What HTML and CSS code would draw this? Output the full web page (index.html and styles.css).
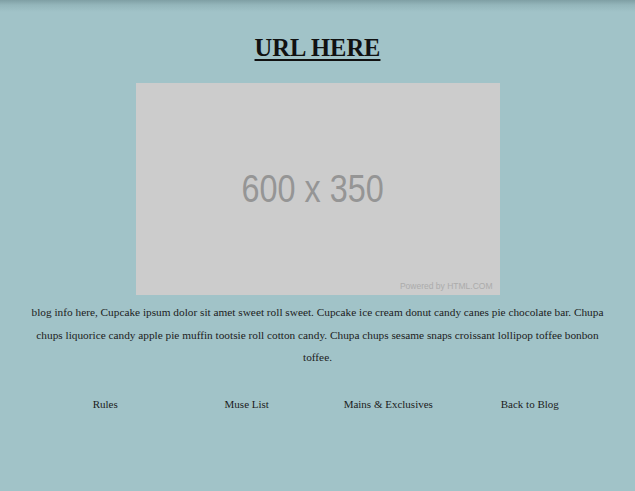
FILE: index.html
```html
<!DOCTYPE html>
<html>
<head>
<meta charset="utf-8">
<link rel="stylesheet" href="styles.css">
</head>
<body>
<div class="page">
  <h1 class="title"><a href="#">URL HERE</a></h1>
  <div class="placeholder">
    <span class="ph-size">600 x 350</span>
    <span class="ph-credit">Powered by HTML.COM</span>
  </div>
  <p class="info">blog info here, Cupcake ipsum dolor sit amet sweet roll sweet. Cupcake ice cream donut candy canes pie chocolate bar. Chupa chups liquorice candy apple pie muffin tootsie roll cotton candy. Chupa chups sesame snaps croissant lollipop toffee bonbon toffee.</p>
  <nav class="nav">
    <a href="#">Rules</a>
    <a href="#">Muse List</a>
    <a href="#">Mains &amp; Exclusives</a>
    <a href="#">Back to Blog</a>
  </nav>
</div>
</body>
</html>
```
FILE: styles.css
```css
html, body {
  margin: 0;
  height: 100%;
}
body {
  background: linear-gradient(to bottom, #7f9fa4 0px, #94b6bb 5px, #a1c3c8 12px) no-repeat, #a1c3c8;
  background-size: 100% 12px, auto;
  font-family: "Liberation Serif", "Times New Roman", serif;
  color: #1c1c1c;
}
.page {
  display: flex;
  flex-direction: column;
  align-items: center;
  padding-top: 33px;
}
.title {
  margin: 0;
  font-size: 24.5px;
  line-height: 30px;
  font-weight: bold;
}
.title a {
  color: #111;
  text-decoration: underline;
  text-decoration-thickness: 2px;
  text-underline-offset: 3px;
}
.placeholder {
  margin-top: 20px;
  width: 364px;
  height: 212px;
  background: #cccccc;
  position: relative;
  display: flex;
  align-items: center;
  justify-content: center;
}
.ph-size {
  font-family: "Liberation Sans", Arial, sans-serif;
  font-size: 39px;
  color: #959595;
  transform: scaleX(0.83);
  margin-right: 10px;
}
.ph-credit {
  position: absolute;
  right: 7px;
  bottom: 4px;
  font-family: "Liberation Sans", Arial, sans-serif;
  font-size: 8.5px;
  color: #ababab;
}
.info {
  margin: 6px 0 0;
  width: 590px;
  text-align: center;
  font-size: 11.3px;
  line-height: 22.5px;
}
.nav {
  margin-top: 29px;
  width: 566px;
  display: grid;
  grid-template-columns: repeat(4, 1fr);
}
.nav a {
  text-align: center;
  font-size: 11px;
  color: #1c1c1c;
  text-decoration: none;
}
```
